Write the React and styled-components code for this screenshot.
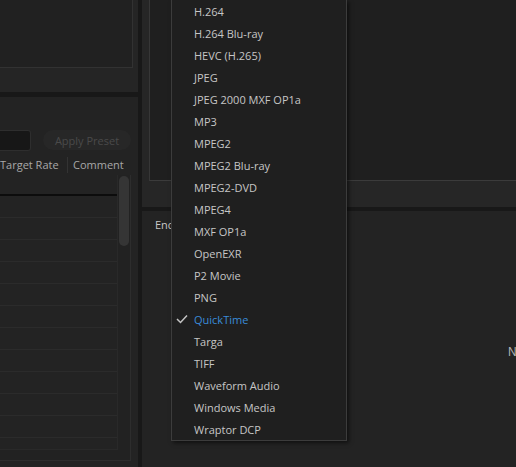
import React from "react";
import styled, { createGlobalStyle } from "styled-components";

const Global = createGlobalStyle`
  html, body { margin: 0; padding: 0; background: #181818; }
  body { font-family: "Open Sans", "Liberation Sans", sans-serif; }
`;

const Screen = styled.div`
  position: relative;
  width: 516px;
  height: 467px;
  overflow: hidden;
  display: flex;
  gap: 4px;
  background: #181818;
  font-size: 11px;
`;

const LeftColumn = styled.div`
  flex: none;
  width: 138px;
  display: flex;
  flex-direction: column;
  gap: 5px;
`;

const Panel = styled.div`
  background: ${(p) => p.$bg || "#232323"};
  height: ${(p) => (p.$h ? `${p.$h}px` : "auto")};
  flex: ${(p) => (p.$h ? "none" : "1")};
  display: flex;
  flex-direction: column;
  overflow: hidden;
  min-width: 0;
`;

const PreviewBox = styled.div`
  width: 132px;
  height: 67px;
  background: #212121;
  border-right: 1px solid #323232;
  border-bottom: 1px solid #323232;
`;

const PresetArea = styled.div`
  padding-top: 33px;
  display: flex;
  flex-direction: column;
  flex: 1;
`;

const Toolbar = styled.div`
  display: flex;
  align-items: center;
  gap: 12px;
  height: 20px;
`;

const SearchField = styled.div`
  width: 30px;
  height: 19px;
  background: #171717;
  border: 1px solid #2e2e2e;
  border-left: none;
  border-radius: 0 3px 3px 0;
`;

const PillButton = styled.div`
  width: 88px;
  height: 20px;
  border-radius: 10px;
  background: #272727;
  color: #4a4a4a;
  font-size: 11px;
  display: flex;
  align-items: center;
  justify-content: center;
`;

const HeaderRow = styled.div`
  display: flex;
  align-items: center;
  height: 20px;
  margin-top: 5px;
  color: #a8a8a8;
`;

const HeaderCell = styled.div`
  width: ${(p) => (p.$w ? `${p.$w}px` : "auto")};
  padding-left: ${(p) => p.$pl || 0}px;
  border-right: ${(p) => (p.$sep ? "1px solid #333" : "none")};
  height: 16px;
  line-height: 16px;
  white-space: nowrap;
  box-sizing: border-box;
`;

const TableFrame = styled.div`
  width: 130px;
  height: 285px;
  border-right: 1px solid #2d2d2d;
  border-bottom: 1px solid #2d2d2d;
  display: flex;
  align-items: flex-start;
  background: #222222;
`;

const List = styled.div`
  width: 118px;
  height: 274px;
  border-right: 1px solid #292929;
  border-bottom: 1px solid #292929;
  background: #232323;
  display: flex;
  flex-direction: column;
  overflow: hidden;
`;

const Row = styled.div`
  flex: none;
  height: ${(p) => p.$h}px;
  border-bottom: ${(p) => (p.$dark ? "2px solid #0c0c0c" : "1px solid #2b2b2b")};
`;

const ScrollTrack = styled.div`
  width: 12px;
  padding: 1px 0 0 1px;
  box-sizing: border-box;
`;

const ScrollThumb = styled.div`
  width: 10px;
  height: 70px;
  border-radius: 5px;
  background: #353535;
`;

const RightColumn = styled.div`
  flex: 1;
  min-width: 0;
  overflow: hidden;
  display: flex;
  flex-direction: column;
  gap: 4px;
`;

const MonitorPanel = styled(Panel)`
  padding: 0 0 26px 7px;
  box-sizing: border-box;
`;

const MonitorBox = styled.div`
  flex: 1;
  background: #1f1f1f;
  border-left: 1px solid #373737;
  border-bottom: 1px solid #3b3b3b;
`;

const Settings = styled.div`
  padding: 7px 0 0 13px;
  color: #c8c8c8;
  display: flex;
  flex-direction: column;
`;

const SettingLabel = styled.div`
  height: 14px;
  line-height: 14px;
  white-space: nowrap;
`;

const FieldRow = styled.div`
  margin-top: 113px;
  padding-left: 353px;
  white-space: nowrap;
  color: #b4b4b4;
  font-family: "Liberation Sans", Arial, sans-serif;
  font-size: 12px;
  line-height: 14px;
`;

const Menu = styled.div`
  position: absolute;
  left: 171px;
  top: 0;
  width: 174px;
  background: #1f1f1f;
  border: 1px solid #3c3c3c;
  border-top: none;
  box-shadow: 2px 2px 4px rgba(0, 0, 0, 0.55);
  display: flex;
  flex-direction: column;
`;

const MenuItem = styled.div`
  height: 22px;
  display: flex;
  align-items: center;
  color: ${(p) => (p.$active ? "#3a8bd8" : "#c6c6c6")};
  white-space: nowrap;
`;

const CheckSlot = styled.div`
  width: 22px;
  height: 22px;
  display: flex;
  align-items: center;
  padding-left: 4px;
  box-sizing: border-box;
`;

const items = [
  "H.264",
  "H.264 Blu-ray",
  "HEVC (H.265)",
  "JPEG",
  "JPEG 2000 MXF OP1a",
  "MP3",
  "MPEG2",
  "MPEG2 Blu-ray",
  "MPEG2-DVD",
  "MPEG4",
  "MXF OP1a",
  "OpenEXR",
  "P2 Movie",
  "PNG",
  "QuickTime",
  "Targa",
  "TIFF",
  "Waveform Audio",
  "Windows Media",
  "Wraptor DCP",
];

const Check = () => (
  <svg width="12" height="10" viewBox="0 0 12 10">
    <polyline
      points="1,5 4.5,8.5 11,1.5"
      fill="none"
      stroke="#c4c4c4"
      strokeWidth="1.5"
    />
  </svg>
);

export default function App() {
  return (
    <>
      <Global />
      <Screen>
        <LeftColumn>
          <Panel $h={92} $bg="#252525">
            <PreviewBox />
          </Panel>
          <Panel>
            <PresetArea>
              <Toolbar>
                <SearchField />
                <PillButton>Apply Preset</PillButton>
              </Toolbar>
              <HeaderRow>
                <HeaderCell $w={68} $sep>
                  Target Rate
                </HeaderCell>
                <HeaderCell $pl={5}>Comment</HeaderCell>
              </HeaderRow>
              <TableFrame>
                <List>
                  <Row $h={19} $dark />
                  {Array.from({ length: 12 }).map((_, i) => (
                    <Row key={i} $h={21} />
                  ))}
                </List>
                <ScrollTrack>
                  <ScrollThumb />
                </ScrollTrack>
              </TableFrame>
            </PresetArea>
          </Panel>
        </LeftColumn>
        <RightColumn>
          <MonitorPanel $h={207} $bg="#262626">
            <MonitorBox />
          </MonitorPanel>
          <Panel>
            <Settings>
              <SettingLabel>Encoding</SettingLabel>
              <FieldRow>Name</FieldRow>
            </Settings>
          </Panel>
        </RightColumn>
        <Menu>
          {items.map((it) => (
            <MenuItem key={it} $active={it === "QuickTime"}>
              <CheckSlot>{it === "QuickTime" && <Check />}</CheckSlot>
              {it}
            </MenuItem>
          ))}
        </Menu>
      </Screen>
    </>
  );
}
